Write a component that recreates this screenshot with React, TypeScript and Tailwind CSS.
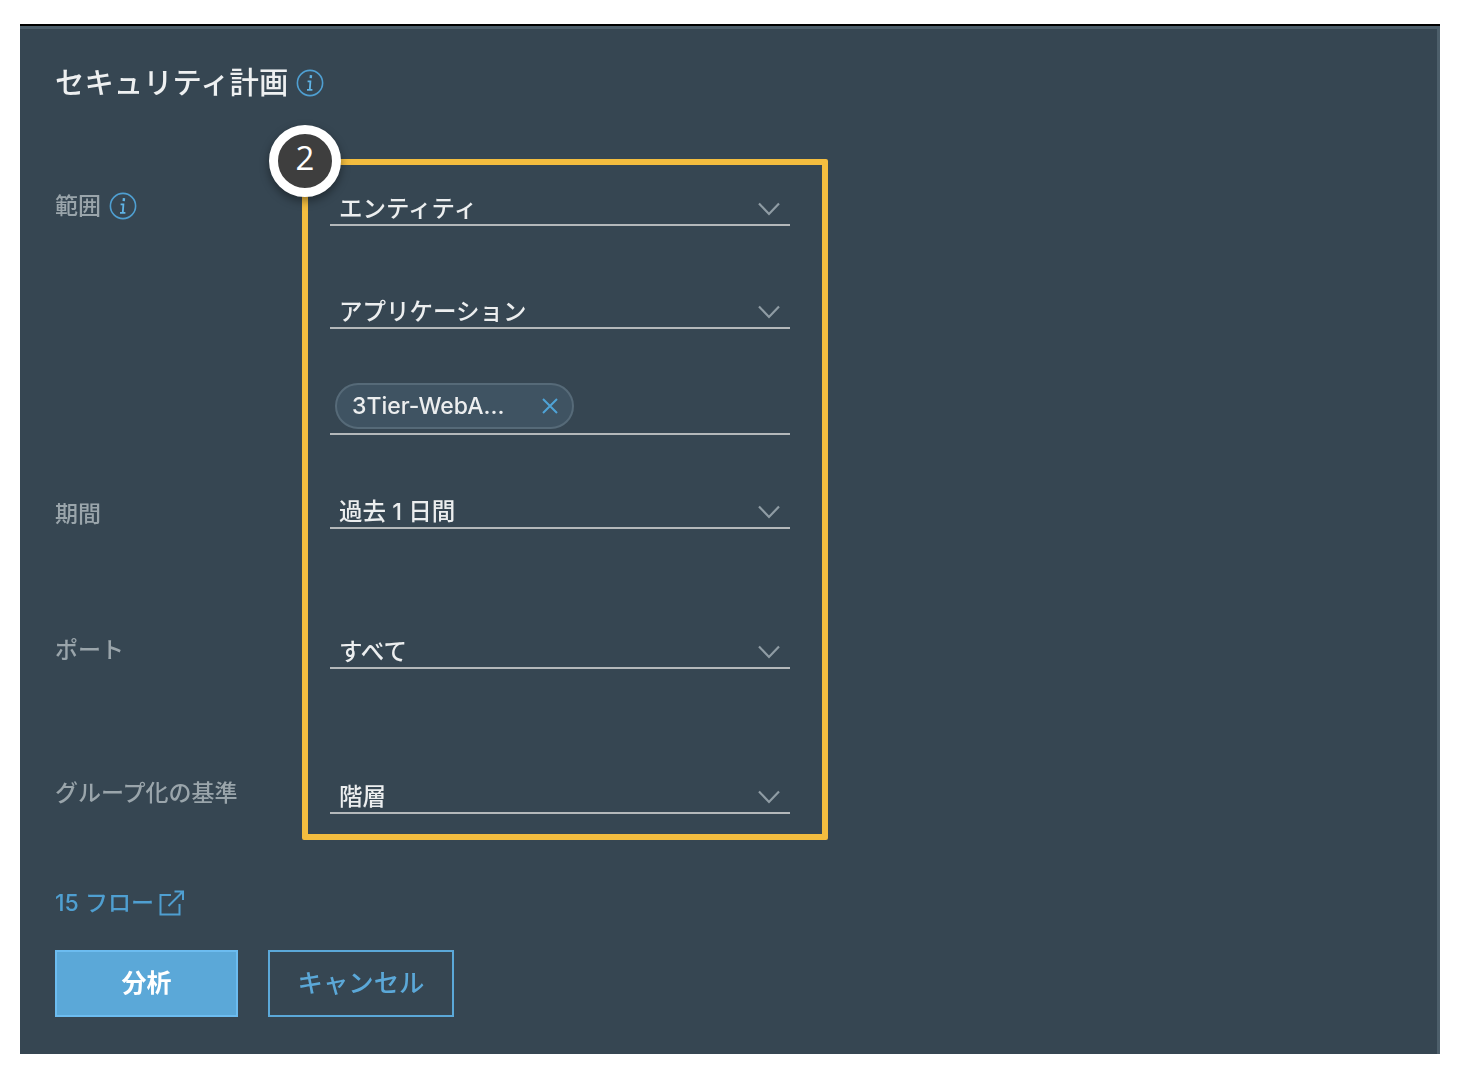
function Info() {
  return (
    <svg width="28" height="28" viewBox="0 0 28 28" fill="none" className="shrink-0 blur-[0.3px]">
      <circle cx="14" cy="14" r="12.6" stroke="#4f9fd1" strokeWidth="1.6" />
      <path d="M15 6.2l-0.3 3" stroke="#5fb4e6" strokeWidth="2.4" />
      <path d="M11.6 12.4h2.8l-0.6 8M11 20.8h5.4" stroke="#5fb4e6" strokeWidth="1.8" />
    </svg>
  );
}

function Chevron() {
  return (
    <svg width="22" height="14" viewBox="0 0 22 14" fill="none" className="shrink-0">
      <path d="M1 1.5l10 10.5 10-10.5" stroke="#8f9ca4" strokeWidth="2.2" />
    </svg>
  );
}

function Field({ h, text }: { h: string; text: string }) {
  return (
    <div className={`flex items-end justify-between border-b-2 border-[#b4b8ba] pl-[9px] pr-[10px] ${h}`}>
      <span className="text-[23.5px] font-medium leading-[30px] text-[#eceeef] blur-[0.4px]">{text}</span>
      <span className="mb-[8px]"><Chevron /></span>
    </div>
  );
}

function Label({ text, cls, info }: { text: string; cls: string; info?: boolean }) {
  return (
    <div className={`flex h-[30px] items-center gap-[8px] text-[23px] font-medium leading-[30px] text-[#9aa5ab] ${cls}`}>
      <span className="blur-[0.4px]">{text}</span>
      {info && <Info />}
    </div>
  );
}

export default function App() {
  return (
    <div className="h-[1082px] bg-white pl-5 pr-7 pt-6 font-['Inter','Noto_Sans_CJK_JP',sans-serif]">
      <div className="h-[1030px] border-t-2 border-black bg-[#364652]">
        <div className="h-full border-t-[3px] border-r-[3px] border-[#4d5f6b] pl-[35px]">
          <div className="flex h-[130px] items-start gap-[8px] pt-[34px]">
            <h1 className="text-[29.4px] font-medium leading-[40px] text-[#eef0f1] blur-[0.4px]">セキュリティ計画</h1>
            <span className="mt-[6px]"><Info /></span>
          </div>

          <div className="flex">
            <div className="w-[247px] shrink-0">
              <Label text="範囲" cls="mt-[32px]" info />
              <Label text="期間" cls="mt-[278px]" />
              <Label text="ポート" cls="mt-[106px]" />
              <Label text="グループ化の基準" cls="mt-[113px]" />
            </div>

            <div className="relative h-[681px] w-[526px] rounded-[2px] border-[6px] border-[#f3bd3f] pl-[22px] pr-[32px]">
              <div className="absolute left-[-39px] top-[-40px] flex h-[72px] w-[72px] items-center justify-center rounded-full border-[9px] border-white bg-[#3e3e3e] pb-[8px] text-[33px] leading-none text-white shadow-[0_4px_10px_rgba(0,0,0,0.4)] font-['Open_Sans',sans-serif]">
                2
              </div>
              <Field h="h-[61px]" text="エンティティ" />
              <Field h="h-[103px]" text="アプリケーション" />
              <div className="flex h-[106px] items-end border-b-2 border-[#b4b8ba] pb-[4px] pl-[5px]">
                <div className="flex h-[46px] w-[239px] items-center justify-between rounded-full border-2 border-[#566a78] bg-[#3f5362] pl-[15px] pr-[14px]">
                  <span className="text-[23px] font-medium leading-none text-[#eceeef] blur-[0.4px]">3Tier-WebA...</span>
                  <svg width="16" height="16" viewBox="0 0 16 16" fill="none">
                    <path d="M1 1l14 14M15 1L1 15" stroke="#4fa3d6" strokeWidth="2" />
                  </svg>
                </div>
              </div>
              <Field h="h-[94px]" text="過去 1 日間" />
              <Field h="h-[140px]" text="すべて" />
              <Field h="h-[145px]" text="階層" />
            </div>
          </div>

          <div className="mt-[47px] flex h-[32px] items-center gap-[5px] text-[23px] font-medium leading-none text-[#4f9fd1]">
            <span className="blur-[0.4px]">15 フロー</span>
            <svg width="26" height="26" viewBox="0 0 26 26" fill="none" className="blur-[0.3px]">
              <path d="M12 5H1.5v19.5h19V14" stroke="#4f9fd1" strokeWidth="2" />
              <path d="M9.5 16L23.5 2M15.5 1.5h8.5V10" stroke="#4f9fd1" strokeWidth="2" />
            </svg>
          </div>

          <div className="mt-[31px] flex gap-[30px]">
            <button className="h-[67px] w-[183px] border-2 border-[#6cbcf0] bg-[#5ba8d8] text-[25px] font-bold text-white">
              <span className="blur-[0.4px]">分析</span>
            </button>
            <button className="h-[67px] w-[186px] border-2 border-[#5ba8d8] text-[25.4px] font-medium text-[#5ba8d8]">
              <span className="blur-[0.4px]">キャンセル</span>
            </button>
          </div>
        </div>
      </div>
    </div>
  );
}
